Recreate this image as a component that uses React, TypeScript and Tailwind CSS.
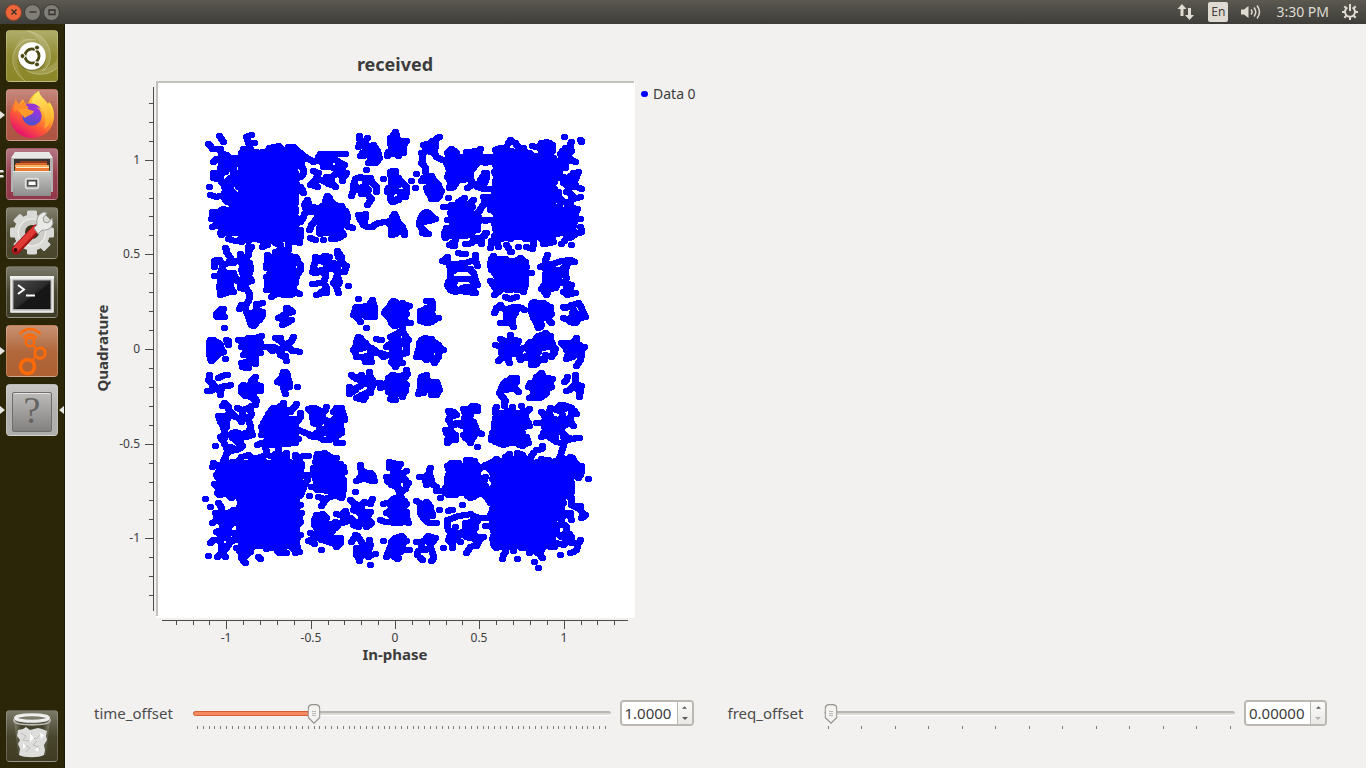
import { useId, useState } from "react";
import type { ReactNode } from "react";

/* ---------- constellation data ---------- */

type Quadrant = { x: number; y: number; points: string; dense: number[][] };

// Coordinates are in thirds of a pixel, relative to the quadrant origin.
const QUADRANTS: Quadrant[] = [
  {
    x: 180,
    y: 110,
    points: `118,78 130,96 86,102 98,116 120,118 100,155 108,148 125,128 138,134 198,82 214,75 224,99 204,98 190,118 210,118 220,125 240,128 262,124 280,112 296,108 325,110 340,112 352,122 368,134 385,146 400,155
    100,190 100,205 88,231 92,256 108,260 120,190 120,210 130,222 135,240 150,235 150,256 130,256 135,270 98,305 95,326 96,350 108,345 115,305 130,300 150,280 165,270 110,325 125,375 145,388 165,392 185,395 205,412 246,412 262,405 285,400 300,404 325,398 345,396 358,398 360,380 362,360 145,210 160,215 175,230 175,200 160,195 135,185 120,175 140,160 165,290 155,145 170,145 125,150 145,172 160,178 160,250 175,260 175,215
    365,150 362,165 370,180 368,195 352,205 362,232 370,250 382,270 372,285 390,290 395,305 378,305 370,320 362,335
    420,132 440,132 460,132 480,132 496,132 412,152 425,150 445,150 465,150 480,158 494,165 430,170 450,170 470,175 400,182 415,190 500,190 490,200 486,212 440,200 455,200 470,190 410,205 392,224 400,215 412,230 445,222 430,212 466,230 455,220 480,180
    442,258 435,272 452,272 412,294 400,305 465,285 483,288 490,300 500,308 502,325 498,345 516,354 505,350 490,375 475,385 455,388 430,390 405,390 390,385 388,360 395,345 405,330
    538,78 562,84 540,95 534,110 550,100 565,108 580,105 592,122 598,144 590,152 585,160 566,158 575,125 560,135 542,138 555,120 575,140
    646,66 632,84 650,85 630,102 645,105 624,125 640,125 622,138 655,138
    559,180 540,200 555,205 570,205 525,208 578,218 588,230 588,245 520,225 522,240 514,257 540,235 555,225 565,240 545,252 560,252 574,267 562,285 610,207 630,185 645,183 635,205 650,205 625,235 640,225 655,225 622,245 635,250 630,268 640,276 655,270
    555,312 535,316 542,330 555,325 550,345 562,352 578,350 588,342 600,338 642,312 635,330 622,335 650,330 630,345 645,350 635,372 638,376 655,365
    136,413 140,426 102,452 118,450 102,470 103,497 150,443 130,465 145,460 160,458 125,480 140,490 120,500 160,490 120,520 135,515 150,510 165,505 118,535 130,535 150,530 160,545 140,548 122,555 182,432 180,450 205,435 195,450 190,465 208,460 185,480 200,480 212,480 190,500 215,512 205,500 180,520 195,520 182,535 200,538 208,552 215,410 208,420 325,420 305,418 285,425
    262,435 262,455 258,475 260,500 262,520 260,540 275,560 290,550 310,556 330,556 345,545 358,552 345,520 350,500 360,480 360,465 352,450 345,440 320,435 290,440
    405,440 405,455 420,450 432,438 448,440 472,424 475,440 485,440 485,455 498,468 493,486 400,470 398,485 410,490 425,480 440,480 455,475 470,470 460,460 440,460 475,485 470,500 435,500 478,515 470,530 475,550 460,520 398,522 415,520 430,518 440,535 425,545 410,556 438,550 504,527
    120,600 130,596 108,612 122,615 132,622 112,622 133,654 206,574 195,588 184,585 178,598 230,582 246,580 200,605 215,610 230,600 248,606 205,620 215,630 235,620 245,622 210,640 220,648 230,636 318,594 325,596 338,605 318,612 305,620 296,624 315,630 335,630 306,645 318,640
    535,567 577,571 530,590 525,600 520,614 550,590 565,588 582,592 582,605 582,620 530,620 540,635 545,610 560,605 560,620 570,622 559,654 640,574 630,585 650,580 620,600 612,608 635,605 650,605 625,620 640,625 635,640 645,648 655,640
    92,690 108,695 145,692 175,690 244,677 205,684 225,684 286,685 300,685 340,680 335,692 262,711 280,712 325,700 310,705 88,712 105,712 120,705 145,705 190,698 215,700 235,695 190,712 215,715 240,712 535,680 545,690 530,695 555,700 590,687 605,690 630,680 645,675 540,708 565,712 625,705 645,695 640,712`,
    dense: [
      [185, 130, 345, 390],
      [120, 300, 190, 375],
      [125, 150, 175, 165],
      [270, 118, 345, 140],
      [415, 290, 485, 375],
      [270, 440, 345, 545],
    ],
  },
  {
    x: 390,
    y: 110,
    points: `16,66 20,82 30,95 50,93 35,110 20,105 5,110 10,130 25,130 40,130 40,115 5,90
    12,184 12,200 25,205 5,215 20,220 38,220 48,230 65,212 48,250 45,262 30,245 10,240 30,262 15,272 8,276
    13,312 18,325 25,338 5,335 38,352 20,350 5,355 5,375 42,365 44,376
    10,572 12,590 38,580 58,588 25,595 45,595 10,610 30,610 48,612 20,630 40,625 52,640 60,640 12,648 35,640
    110,572 125,572 127,588 110,595 90,604 125,605 105,610 92,615 130,622 144,624 115,620 90,632 108,640 125,635
    148,80 135,90 120,98 100,105 120,110 135,110 95,130 110,120 130,130 140,142 152,148 165,150 98,145 95,158 106,174
    78,191 76,234 108,196 125,198 95,214 115,212 132,212 145,225 108,234 125,230 140,238 154,242 115,250 130,255 148,258 125,266 140,266
    108,305 98,315 120,315 135,327 118,332 90,328 88,345 102,335 100,360 98,370 114,372
    184,118 172,128 200,128 228,125 245,125 262,122 272,116 265,135 180,145 172,165 268,155 255,165 245,180 180,185 172,200 180,225 190,230 200,215 232,235 250,222 178,235 240,205 262,230 258,140 282,190 272,210 290,188
    280,142 285,158 295,145 290,205 282,220 280,238 298,238 280,262 295,262 300,280 285,282
    175,264 160,290 175,290 223,264 205,275 250,270 240,282 272,296 262,310 285,332 270,330 172,330 168,355 162,370 165,385 178,405 194,408 195,390 225,402 245,400 260,385 275,402 275,385 285,370 262,360 250,390 262,340
    361,90 375,100 385,110 400,115 350,110 330,115 315,120 340,118 418,130 428,108 445,112 455,100 468,96 470,108 488,104 486,122 460,122 300,140 305,155 430,140 450,138 475,138
    523,80 572,90 575,95 545,96 540,110 525,115 545,122 510,132 530,135 545,150 555,155 525,155 525,175 566,186 550,190 560,200 520,200 535,205 550,215 520,220 540,230 560,232 575,237 530,245 545,255 555,265 570,262 545,270 505,245 503,258 515,270 528,280 505,290 540,290 562,296 555,310 572,326 555,330 572,350 575,367 560,370 545,380 530,385 515,402 545,405 490,395 470,400 460,402 430,395 428,416 410,410 385,410 365,425 350,405 325,410 302,413 305,393 290,370 300,330 300,300 320,395
    205,430 226,432 256,436 172,440 158,452 175,460 180,475 195,462 215,460 235,455 255,452 262,468 240,478 220,478 200,478 180,485 250,488 180,505 195,508 172,524 190,525 180,540 195,545 215,508 235,508 255,510 262,525 225,530 245,530 225,545 240,546 256,550 210,540
    310,438 360,425 300,458 305,480 300,513 312,530 313,554 325,545 345,562 362,568 380,560 400,545 405,525 405,510 405,490 425,490 410,470 405,455 390,445
    472,436 465,450 450,470 465,468 485,462 505,455 525,452 540,450 552,456 470,485 490,480 510,480 530,470 465,500 485,500 505,500 525,490 530,505 465,520 485,520 505,520 525,520 545,524 455,538 475,540 495,535 535,540 520,545 555,550 533,555 470,555 540,530
    332,585 318,595 312,608 350,600 370,590 385,590 402,600 335,595 360,610 375,610 350,620 368,625 332,640 350,638 365,640 370,652
    432,575 450,580 460,580 425,585 440,595 460,595 480,590 425,605 445,610 465,612 485,612 430,625 450,625 470,625 485,640 440,640 455,645 445,655
    566,578 545,585 525,595 520,590 550,600 575,595 580,610 585,620 560,615 545,620 520,625 535,630 560,635 550,640 565,625
    38,662 20,672 5,680 45,678 25,690 10,700 40,700 55,690 125,687 105,684 95,690 110,700 88,700 120,705 152,719 130,720 100,720 360,674 330,687 385,692 345,695 365,690 315,705 335,710 360,710 380,705 465,670 445,678 435,690 460,685 482,678 480,695 420,700 440,705 465,705 485,705 495,718 560,685 545,698 525,700 515,698 560,700 575,710 582,712 530,715 550,715`,
    dense: [
      [180, 140, 240, 215],
      [185, 285, 250, 375],
      [315, 125, 410, 390],
      [400, 145, 495, 385],
      [490, 150, 515, 200],
      [490, 300, 550, 370],
      [315, 450, 395, 540],
    ],
  },
  {
    x: 180,
    y: 340,
    points: `88,5 100,0 115,10 90,20 105,22 120,20 145,15 140,0 88,38 100,35 118,40 135,58 130,35 95,62 90,50 105,50
    190,0 210,5 230,0 185,22 200,25 220,22 240,10 240,40 190,45 210,45 230,40 185,68 225,60 225,72 188,80 205,85 205,65
    262,20 280,20 278,32 295,28 310,25 325,10 328,25 338,32 358,36 300,45 315,48 320,62 295,0
    530,10 550,5 520,30 540,28 560,20 575,25 590,35 530,50 550,50 555,65 575,65 570,45 600,40 620,20 640,20 655,20 620,45 640,45 655,50 610,50 645,70 645,82 655,65
    142,104 128,108 114,113 88,106 86,120 96,130 82,153 98,150 110,145 125,140 140,138 152,135 122,165 122,155
    225,110 215,122 222,130 190,135 205,140 220,145 240,138 184,142 185,155 200,155 215,160 242,153 230,150 210,170 225,178 195,168
    310,96 320,98 322,112 305,115 292,126 310,130 328,128 328,140 310,145 315,162 352,141
    514,104 568,96 570,110 545,106 550,120 528,118 582,128 565,130 545,135 535,140 575,145 508,141 525,150 508,161 528,174 545,165 560,160 550,180 570,160 600,130 600,145 640,105 625,115 645,120 620,135 640,140 655,140 625,155 640,160 630,178 645,180 655,110
    133,190 126,198 145,200 148,213 115,228 130,230 145,228 160,226 172,204 185,210 205,203 225,195 228,182 215,222 205,232 190,232 175,235 122,245 140,245 130,265 140,262 208,250 185,245 212,265 218,285 200,290 185,285 165,275 150,285 135,285 120,291 130,302 165,300 205,275 180,292 106,318 138,323 150,320 145,335 165,330 175,328 188,318 182,310
    310,188 350,192 280,205 295,205 310,205 340,205 330,215 360,220 360,232 270,215 262,230 255,240 350,245 245,260 250,275 245,285 355,270 370,275 355,298 335,310 315,312 295,314 275,315 255,315 232,316 245,308 335,290 295,220 310,222
    385,206 402,204 415,210 440,202 430,215 398,220 398,235 410,225 425,235 400,250 415,255 460,215 470,205 484,204 490,225 494,240 470,225 460,240 480,240 460,260 440,265 430,275 450,280 470,270 482,262 485,280 385,283 400,285 415,290 400,292 430,300 448,300 465,290 470,308 486,308 420,275 445,245
    258,334 295,334 262,345 240,350 320,338 345,345 370,348 386,348 350,355 135,350 130,362 185,352 205,345 218,355 150,370 170,365 280,350 300,352 320,355
    100,370 98,380 108,405 104,432 115,445 122,465 365,380 362,370 380,405 382,420 372,435 368,450 362,465 360,495 364,518 355,530 362,545 350,560 362,584 345,600 340,620 358,636 345,638 320,638 298,638 285,625 260,628 76,476 92,500 115,488 125,505 105,520 98,548 115,540 130,530 145,520 160,510 108,575 125,570 145,560 160,550 92,608 100,600 120,598 140,590 125,615 150,605 165,600 140,625 125,635 112,652 136,650 86,648 165,580 170,625 185,640 200,645 210,635 185,655 196,668 235,650 240,658 215,625 170,540 125,520 150,540 130,552 165,525 120,585 145,575
    412,342 432,340 450,350 470,355 408,360 400,385 400,405 395,440 408,440 415,470 435,480 452,470 470,465 485,475 488,460 490,440 490,420 492,395 490,380 455,370 430,360
    388,468 424,497 428,522 410,525 402,540 402,555 420,540 435,545 440,535 450,560 465,545 470,522 485,525 497,513 500,530 495,545 480,550 465,565 430,575 415,570 440,590 425,600 410,590 391,578 385,602 402,612 455,600 470,595 482,595 468,620 465,610 480,608 445,605 424,630 400,600 415,555 432,560 450,578
    540,376 545,390 530,422 545,415 545,405 560,400 572,398 580,412 582,424 565,420 526,455 511,480 577,476 552,486 525,492 540,500 570,492 520,510 535,515 550,515 570,515 512,535 525,545 520,555 545,530 560,535 575,550 560,560 545,545 534,560 525,586 532,588 514,606 568,600 545,605 550,620 570,615 530,625 565,630 586,642 565,650 545,640 530,645 538,662 540,652 571,675
    628,366 650,372 628,385 645,390 620,410 640,410 625,425 645,430 655,445 622,420 645,475 630,485 610,492 655,490 635,505 650,510 620,520 640,530 600,540 615,545 632,545 650,550 655,530 610,602 655,590 640,600 630,620 650,615 625,635 640,635 620,650 655,655`,
    dense: [
      [262, 235, 345, 305],
      [150, 370, 360, 470],
      [180, 460, 350, 625],
      [115, 375, 150, 465],
      [410, 370, 480, 455],
    ],
  },
  {
    x: 390,
    y: 340,
    points: `10,5 30,5 50,5 5,25 25,25 48,22 10,45 30,45 48,40 5,65 25,62 38,68 15,80
    80,50 85,30 90,12 110,10 130,5 120,25 145,15 160,30 145,35 100,35 120,45 145,52 110,60 133,68 130,55 95,50
    48,90 52,102 30,108 8,105 20,120 40,120 5,130 25,140 48,135 10,155 30,155 45,152 12,178 38,170 15,165
    108,105 95,112 90,128 110,120 120,128 138,125 145,140 148,150 110,140 125,145 95,145 84,162 100,158 125,165 138,165 140,155
    340,5 360,5 380,5 315,15 335,20 355,25 375,20 390,30 335,40 350,45 370,40 340,50 325,62 358,70 355,58 391,60 408,48 385,45
    420,5 440,5 460,5 485,5 410,20 430,25 450,25 470,20 488,20 492,38 420,40 440,45 465,45 485,50 425,60 445,60 462,60 425,75 440,72
    518,8 535,10 555,5 525,22 545,25 565,20 582,20 575,35 535,40 555,42 575,48 528,58 570,60 558,78 548,50
    365,115 378,115 350,122 340,132 355,135 372,130 335,145 350,150 328,158 370,145 386,156 340,175 345,183 378,125
    454,100 440,112 460,112 475,115 488,117 420,130 435,128 455,130 475,130 416,140 430,150 450,148 470,145 485,140 430,165 450,165 470,158 455,172 418,175 440,175
    556,104 532,112 524,126 555,115 555,132 575,138 560,145 545,145 530,152 570,155 568,170
    175,212 190,215 180,228 175,240 198,225 220,206 235,210 248,198 262,200 262,212 245,215 225,225 235,235 220,245 200,250 250,245 185,258 165,270 180,275 175,290 172,308 195,285 195,300 210,255 225,260 240,265 255,262 262,275 273,282 235,280 220,285 250,290 235,300 240,308 262,320 185,295
    318,200 342,198 368,200 395,198 418,206 315,215 405,220 312,250 410,240 418,258 312,270 305,300 305,290 325,310 340,315 360,308 380,310 398,318 415,308 410,290
    453,215 480,204 512,194 530,198 545,205 478,220 460,222 500,210 515,215 545,222 560,222 465,235 485,235 440,248 460,250 480,250 500,240 520,235 540,240 505,255 525,255 550,258 545,250 465,270 490,270 455,290 475,285 495,285 490,300 518,280 530,290 545,298 568,294 555,295 520,310 518,326 525,300 458,318 455,328 438,330 500,305 510,265
    345,350 358,343 382,340 398,345 425,348 320,358 305,368 295,372 455,358 475,360 512,348 542,350 550,360 575,378 575,395 565,415 596,416 545,430 545,445 530,460 545,473 360,356 380,356 400,358 420,360 505,362 525,362
    300,390 300,465 300,490 305,520 305,560 310,590 320,625 345,635 337,656 370,632 382,656 418,638 400,620 435,630 450,645 458,655 432,665 445,684 455,630 500,490 520,490 545,495 555,500 570,498 570,510 510,510 525,520 540,520 585,525 575,535 500,530 515,535 545,540 500,560 530,560 515,550 530,575 500,580 515,590 545,590 570,600 565,610 530,600 545,610 520,615 560,630 540,640 512,645 500,610 480,620
    230,360 252,362 205,368 185,370 172,378 275,380 290,380 180,395 172,415 172,435 160,452 175,465 195,465 152,474 225,460 240,475 260,465 275,460 290,470 280,430 265,415 285,410 262,395 290,445 268,445
    217,495 175,512 187,510 240,522 220,525 205,528 190,535 172,540 172,560 180,580 195,560 225,550 240,545 258,532 270,535 285,535 300,530 287,558 225,570 210,580 240,570 255,565 262,590 245,595 230,590 195,595 175,600 185,610 212,605 188,625 160,624 230,638 240,620 260,618 280,590 265,605 190,578 240,558 255,550 245,580
    120,384 118,395 88,411 105,412 120,410 125,420 110,434 125,432 138,440 138,453
    5,368 30,372 20,390 48,393 10,400 35,405 5,420 25,420 45,420 55,430 20,440 45,448 28,460 5,435 35,475 10,478 50,492 25,490 10,500 35,505 48,515 10,525 30,525 48,530 55,548 10,548 25,550 40,545
    80,482 108,486 95,495 90,510 105,505 120,500 125,515 148,510 95,525 110,525 128,528 105,540 118,550 140,548
    35,588 12,598 30,602 48,602 15,615 35,618 58,630 10,635 25,640 40,630 22,657 5,645 5,605
    115,588 105,600 136,594 80,605 95,608 125,610 95,625 82,645 85,632 105,630 120,622 128,640 130,655 98,660 124,664`,
    dense: [
      [320, 215, 405, 300],
      [310, 365, 560, 410],
      [310, 400, 540, 475],
      [310, 480, 490, 620],
      [185, 375, 255, 455],
    ],
  },
];

function dot(x: number, y: number) {
  return `M${x - 2} ${y - 3}h5v1h1v4h-1v1h-5v-1h-1v-4h1z`;
}

// Neighbours closer than this (in thirds of a pixel) belong to one cloud.
const LINK = 23;

function buildSamples() {
  const parts = new Set<string>();
  let seed = 11;
  const jitter = () => {
    seed = (seed * 1103515245 + 12345) % 2147483648;
    return Math.floor((seed / 2147483648) * 3) - 1;
  };
  for (const q of QUADRANTS) {
    const place = (px: number, py: number) =>
      parts.add(dot(q.x + Math.floor(px / 3), q.y + Math.round(py / 3)));
    const points = q.points
      .trim()
      .split(/\s+/)
      .map((pair) => pair.split(",").map(Number));
    points.forEach(([px, py], i) => {
      place(px, py);
      for (let j = i + 1; j < points.length; j++) {
        const [nx, ny] = points[j];
        if (Math.hypot(nx - px, ny - py) < LINK) place((nx + px) / 2, (ny + py) / 2);
      }
    });
    for (const [x0, y0, x1, y1] of q.dense) {
      for (let y = y0; y <= y1; y += 10) {
        for (let x = x0; x <= x1; x += 10) {
          place(x + jitter() * 3, y + jitter() * 3);
        }
      }
    }
  }
  return [...parts].join("");
}

const SAMPLES = buildSamples();
const TICKS = Array.from({ length: 27 }, (_, i) => i - 13);

function Constellation() {
  return (
    <svg
      viewBox="90 78 546 588"
      className="h-[588px] w-[546px] shrink-0"
      role="img"
      aria-label="received"
      fontFamily="'Noto Sans', sans-serif"
      fill="#3c3c3c"
    >
      <g shapeRendering="crispEdges">
        <rect x="156" y="81" width="479" height="537" fill="#ffffff" />
        <path d="M156 81h478v2h-476v533h-2z" fill="#c3c1be" />
        <path d={SAMPLES} fill="#0000ff" />
        <path d="M153 87h1v524h-1zM162 620h466v1h-466z" fill="#4c4c4c" />
        {TICKS.map((t) => {
          const len = t % 5 === 0 ? 8 : 4;
          return (
            <g key={t} fill="#4c4c4c">
              <rect x={Math.round(395 + t * 16.87)} y="621" width="1" height={len} />
              <rect x={153 - len} y={Math.round(349 - t * 18.93)} width={len} height="1" />
            </g>
          );
        })}
      </g>
      {[-1, -0.5, 0, 0.5, 1].map((v) => (
        <g key={v} fontSize="12">
          <text x={Math.round(395 + v * 168.7)} y="642" textAnchor="middle">
            {v}
          </text>
          <text x="140" y={Math.round(353 - v * 189.3)} textAnchor="end">
            {v}
          </text>
        </g>
      ))}
      <g fontSize="15" fontWeight="700" textAnchor="middle">
        <text x="395" y="660">
          In-phase
        </text>
        <text transform="translate(108 348) rotate(-90)">Quadrature</text>
      </g>
    </svg>
  );
}

/* ---------- controls ---------- */

type OffsetProps = {
  label: string;
  labelClass: string;
  spinClass: string;
  digits: number;
  initial: number;
  max: number;
  min: number;
  step: number;
  ticks: number;
};

function OffsetControl({ label, labelClass, spinClass, digits, initial, min, max, step, ticks }: OffsetProps) {
  const id = useId();
  const [value, setValue] = useState(initial);
  const ratio = (value - min) / (max - min);
  const set = (v: number) => setValue(Math.min(max, Math.max(min, v)));
  return (
    <div className="flex items-start">
      <label htmlFor={id} className={`${labelClass} shrink-0 leading-[26px]`}>
        {label}
      </label>
      <div className="min-w-0 flex-1">
        <div className="relative flex h-[26px] items-center">
          <div className="h-[5px] w-full overflow-hidden rounded-full border-t-2 border-b border-t-[#b9b6b1] border-b-white bg-[#dcdad7]" />
          {ratio > 0 && (
            <div
              className="absolute left-0 h-[5px] rounded-l-full border border-[#d65e33] bg-[#f58a62]"
              style={{ width: `${ratio * 100}%` }}
            />
          )}
          <div className="pointer-events-none absolute inset-x-[7px] inset-y-0">
            <svg
              viewBox="0 0 13 20"
              className="absolute top-1 h-5 w-[13px] -translate-x-1/2"
              style={{ left: `${ratio * 100}%` }}
            >
              <path
                d="M.7 5Q.7.7 5 .7h3q4.300 0 4.300 4.300v8.500L6.500 19.200.7 13.500z"
                fill="#f4f3f2"
                stroke="#95928c"
                strokeWidth="1.200"
              />
              <path d="M4.500 7.500h4M4.500 9.500h4M4.500 11.500h4" stroke="#aaa7a2" strokeWidth=".8" />
            </svg>
          </div>
          <input
            type="range"
            aria-label={`${label} slider`}
            min={min}
            max={max}
            step={step}
            value={value}
            onChange={(e) => set(Number(e.target.value))}
            className="absolute inset-0 m-0 h-full w-full cursor-pointer opacity-0"
          />
        </div>
        <div className="mx-[4px] flex h-[3px] justify-between" aria-hidden="true">
          {Array.from({ length: ticks }, (_, i) => (
            <span key={i} className="w-px bg-[#7f7d79]" />
          ))}
        </div>
      </div>
      <div
        className={`${spinClass} ml-[9px] flex h-[26px] shrink-0 overflow-hidden rounded-[4px] border-2 border-[#bbb8b2] bg-white`}
      >
        <input
          id={id}
          type="text"
          value={value.toFixed(digits)}
          onChange={(e) => set(Number(e.target.value) || min)}
          className="min-w-0 flex-1 bg-white pl-[3px] text-[15px] text-[#3c3c3c] outline-none"
        />
        <div className="flex w-[15px] flex-col border-l border-[#bbb8b2] bg-gradient-to-b from-[#fbfbfa] to-[#e9e8e6]">
          <button
            type="button"
            aria-label={`Increase ${label}`}
            onClick={() => set(value + step)}
            className="flex flex-1 items-center justify-center"
          >
            <svg viewBox="0 0 6 3" className="h-[3px] w-[5px]">
              <path d="M0 3L3 0l3 3z" fill="#5c5a56" />
            </svg>
          </button>
          <button
            type="button"
            aria-label={`Decrease ${label}`}
            onClick={() => set(value - step)}
            className="flex flex-1 items-center justify-center"
          >
            <svg viewBox="0 0 6 3" className="h-[3px] w-[6px]">
              <path d="M0 0h6L3 3z" fill={value <= min ? "#b3b0ab" : "#5c5a56"} />
            </svg>
          </button>
        </div>
      </div>
    </div>
  );
}

/* ---------- launcher ---------- */

function Tile({
  label,
  tone,
  pips = 0,
  focused = false,
  children,
}: {
  label: string;
  tone: string;
  pips?: number;
  focused?: boolean;
  children: ReactNode;
}) {
  return (
    <button
      type="button"
      aria-label={label}
      className={`${tone} relative h-[52px] w-[52px] shrink-0 rounded-[4px] border border-white/20 bg-gradient-to-b from-white/35 via-white/10 to-white/5`}
    >
      <svg viewBox="0 0 52 52" className="absolute -top-px -left-px h-[52px] w-[52px]">
        {children}
      </svg>
      {pips > 0 && (
        <svg viewBox="0 0 5 10" className="absolute top-[20px] -left-[7px] h-[10px] w-[5px]" fill="#e6e5e2">
          {pips === 1 ? <path d="M0 1l5 4-5 4z" /> : <path d="M0 1h3l1 1.500-1 1H0zM0 6h3l1 1.500-1 1H0z" />}
        </svg>
      )}
      {focused && (
        <svg viewBox="0 0 5 10" className="absolute top-[20px] -right-[7px] h-[10px] w-[5px]" fill="#e6e5e2">
          <path d="M5 1L0 5l5 4z" />
        </svg>
      )}
    </button>
  );
}

function Launcher() {
  return (
    <nav
      aria-label="Launcher"
      className="flex w-[65px] shrink-0 flex-col gap-[7px] border-r border-[#1c1a08] bg-[#2b2607] px-[6px] py-[6px]"
    >
      <Tile label="Search your computer" tone="bg-[#85801c]">
        <path d="M1 11C9 7 20 6 30 12c-9-1-17 4-18 13-3 7 0 16 7 26C9 42 5 30 9 19 10 13 14 9 20 7 13 7 7 8 1 11z" fill="#fff" fillOpacity=".12" />
        <path d="M21 1c15 2 25 14 23 29-1 5-4 9-8 11 5-8 5-17 0-24C33 10 28 4 21 1z" fill="#fff" fillOpacity=".15" />
        <path d="M51 38c-9 8-22 8-31 2-4-3-7-7-7-12 5 9 14 13 23 11 6-1 11-4 15-9z" fill="#fff" fillOpacity=".17" />
        <g fill="none" stroke="#dcdba8" strokeOpacity=".5">
          <path d="M19 51C7 42 3 27 11 17c5-7 12-9 19-7" />
          <path d="M21 1c15 2 25 14 23 29-1 5-4 9-8 11" />
          <path d="M51 38c-9 8-22 8-31 2" />
        </g>
        <circle cx="26" cy="27" r="14" fill="#514d10" opacity=".5" />
        <circle cx="26" cy="26" r="13.800" fill="#fff" />
        <circle cx="26" cy="26" r="7" fill="none" stroke="#4d4914" strokeWidth="3" />
        <path d="M26 26H12M26 26l7-12M26 26l7 12" stroke="#fff" strokeWidth="1.200" />
        <circle cx="26" cy="26" r="5.500" fill="#fff" />
        <g fill="#4d4914" stroke="#fff" strokeWidth="1">
          <circle cx="16.500" cy="26" r="2.500" />
          <circle cx="31" cy="17.600" r="2.500" />
          <circle cx="31" cy="34.400" r="2.500" />
        </g>
      </Tile>

      <Tile label="Firefox" tone="bg-[#a94b38]" pips={1}>
        <defs>
          <linearGradient id="fx-body" x1=".85" y1=".1" x2=".3" y2="1">
            <stop offset="0" stopColor="#fff44f" />
            <stop offset=".35" stopColor="#ffb02e" />
            <stop offset=".65" stopColor="#ff5a36" />
            <stop offset="1" stopColor="#e30d72" />
          </linearGradient>
          <linearGradient id="fx-globe" x1=".7" y1="0" x2=".3" y2="1">
            <stop offset="0" stopColor="#a82ee0" />
            <stop offset="1" stopColor="#4655c9" />
          </linearGradient>
          <linearGradient id="fx-flame" x1="0" y1="0" x2=".3" y2="1">
            <stop offset="0" stopColor="#fff36a" />
            <stop offset="1" stopColor="#ffac2e" />
          </linearGradient>
        </defs>
        <path
          d="M10 9c0 3 1 5 3 6l4-5c1 3 2 5 5 6 1-6 5-11 11-14 0 5 6 8 9 13l1-2c4 4 5 9 5 14 0 13-10 22-22 22S4 40 4 27c0-6 2-10 5-14z"
          fill="url(#fx-body)"
        />
        <path d="M33 2c0 6 8 9 11 17 3 9 0 17-6 21 4-9 1-20-8-23-4-2-5-2-5-2 1-5 4-10 8-13z" fill="url(#fx-flame)" />
        <circle cx="26" cy="27" r="9.700" fill="url(#fx-globe)" />
        <path d="M11 20c5-3 9-2 13 1l4 1c-1 4-6 4-9 7-3-3-6-6-8-9z" fill="#ff9a2b" />
        <path d="M19 16c6-3 13-1 16 4-4-2-8-2-11 1-1-3-3-4-5-5z" fill="#9536d4" />
        <path d="M10 11c0 3 2 5 4 6l4-5c0 3 2 5 5 7-6 0-11 1-15 4 0-4 0-8 2-12z" fill="#ff8a2c" />
      </Tile>

      <Tile label="Files" tone="bg-[#8b2d3f]" pips={2}>
        <defs>
          <linearGradient id="files-front" x1="0" y1="0" x2="0" y2="1">
            <stop offset="0" stopColor="#c9c9c7" />
            <stop offset="1" stopColor="#8d8d8b" />
          </linearGradient>
        </defs>
        <path d="M9 4h34l4 7v33H5V11z" fill="#b5b4b2" />
        <path d="M9 4h34l4 6H5z" fill="#e8e8e6" />
        <path d="M8 11h36v12H8z" fill="#383431" />
        <path d="M14 13h27v2H14z" fill="#8f3a1d" />
        <path d="M10 15h31v8H9v-6z" fill="#d9662a" />
        <path d="M9 17h34v2H9z" fill="#f7b25e" />
        <path d="M10 19h33v1H10z" fill="#fbe8cb" />
        <path d="M9 20h34v3H9z" fill="#ee7a31" />
        <rect x="7" y="23" width="38" height="25" rx="1" fill="url(#files-front)" />
        <path d="M7 23.500h38" stroke="#efefed" />
        <rect x="19.500" y="30.500" width="13" height="10" rx="2" fill="#b2b1af" stroke="#dededc" strokeWidth="1.500" />
        <rect x="21.800" y="32.800" width="8.500" height="5" fill="#fff" stroke="#444340" strokeWidth="1.400" />
      </Tile>

      <Tile label="System Settings" tone="bg-[#3e3b20]">
        <g fill="#d9d9d6">
          {[0, 45, 90, 135].map((a) => (
            <rect key={a} x="21" y="3.500" width="10" height="44" rx="1.500" transform={`rotate(${a} 26 25.500)`} />
          ))}
          <circle cx="26" cy="25.500" r="18" />
        </g>
        <circle cx="26" cy="25.500" r="13.500" fill="#cecdca" stroke="#efefec" strokeWidth="1.200" />
        <circle cx="26" cy="25" r="7" fill="#38351a" />
        <path d="M10 43L30 22" stroke="#a51414" strokeWidth="9" strokeLinecap="round" />
        <path d="M10 42L29 22" stroke="#e03a35" strokeWidth="6" strokeLinecap="round" />
        <circle cx="9.500" cy="43" r="2" fill="#3a0909" />
        <path
          d="M28 21l3-3c-1-6 1-11 7-13l3 1-4 5 1 4 4 1 4-5 1 5c-1 5-6 8-11 7l-4 4z"
          fill="#e9e9e7"
          stroke="#999996"
          strokeWidth="1"
        />
      </Tile>

      <Tile label="Terminal" tone="bg-[#35321a]">
        <defs>
          <linearGradient id="term-glass" x1="0" y1="0" x2="1" y2="1">
            <stop offset="0" stopColor="#4c4c4c" />
            <stop offset=".5" stopColor="#2b2b2b" />
            <stop offset=".55" stopColor="#161616" />
          </linearGradient>
        </defs>
        <rect x="4" y="10" width="44" height="37" rx="1" fill="#a9aaa9" />
        <path d="M4 10h44v3H4z" fill="#f3f3f1" />
        <rect x="5.500" y="12.500" width="41" height="33" fill="none" stroke="#e8e8e6" strokeWidth="2" />
        <rect x="7.500" y="14.500" width="37" height="28.500" fill="url(#term-glass)" />
        <path d="M12 19l6 4.500-6 4.500M20 29.500h9" fill="none" stroke="#fff" strokeWidth="2" />
      </Tile>

      <Tile label="GNU Radio Companion" tone="bg-[#a95827]" pips={1}>
        <g fill="none" stroke="#ff6a08">
          <path d="M13.500 9q10.500-10 21 0" strokeWidth="2.600" />
          <path d="M17.500 13q6.500-7 13 0" strokeWidth="2.600" />
          <circle cx="24" cy="17" r="4.200" strokeWidth="2.500" />
          <circle cx="34" cy="28" r="5.200" strokeWidth="2.800" />
          <circle cx="21.500" cy="41.500" r="7" strokeWidth="3.600" />
          <path d="M27 20.500l3 3M29 32l-3 4" strokeWidth="2" />
        </g>
      </Tile>

      <Tile label="Unknown application" tone="bg-[#aaa9a6]" pips={1} focused>
        <defs>
          <linearGradient id="unknown-face" x1="0" y1="0" x2="0" y2="1">
            <stop offset="0" stopColor="#bdbcba" />
            <stop offset="1" stopColor="#81807e" />
          </linearGradient>
        </defs>
        <rect x="6.500" y="8.500" width="39" height="39" rx="1.500" fill="url(#unknown-face)" stroke="#6f6e6c" />
        <path d="M8 9.500h36" stroke="#e5e4e2" />
        <text x="26" y="39" textAnchor="middle" fontSize="38" fontFamily="'Liberation Serif', serif" fill="#656462">
          ?
        </text>
      </Tile>

      <div className="mt-auto flex">
        <Tile label="Trash" tone="bg-[#353217]">
          <defs>
            <linearGradient id="bin-glass" x1="0" y1="0" x2="1" y2="0">
              <stop offset="0" stopColor="#8c8b7c" />
              <stop offset=".2" stopColor="#3d3b26" />
              <stop offset=".8" stopColor="#3d3b26" />
              <stop offset="1" stopColor="#8c8b7c" />
            </linearGradient>
          </defs>
          <path d="M8 9l4 35c1 4 27 4 28 0l4-35z" fill="url(#bin-glass)" opacity=".75" />
          <path
            d="M12 20l5-1 3-2 4 3 4-1 4-1 4 1 5 2-1 5 1 4-3 5 1 5-1 5c-5 3-20 3-25 0l1-6-2-5 2-4-3-4z"
            fill="#dddddb"
          />
          <path
            d="M15 23l5 3-3 4 6 1M26 23l-2 4 6 2 4-4M31 31l-4 4 6 2M19 35l5 3-4 4M34 38l-3 4"
            fill="none"
            stroke="#bcbcb9"
            strokeWidth="1"
          />
          <path d="M24 23l4 5-4 4zM34 23l4 2-3 4zM17 33l3 3-3 3zM29 39l4-1-1 4z" fill="#fff" />
          <ellipse cx="26" cy="8" rx="16.500" ry="3.200" fill="#7c7b6c" stroke="#ededeb" strokeWidth="3" />
          <path d="M8 9v2c2 5 34 5 36 0V9" fill="none" stroke="#b9b9b5" strokeWidth="1.800" />
        </Tile>
      </div>
    </nav>
  );
}

/* ---------- top panel ---------- */

function WindowButton({ label, tone, d }: { label: string; tone: string; d: string }) {
  return (
    <button type="button" aria-label={label} className={`${tone} flex h-[17px] w-[17px] items-center justify-center rounded-full border`}>
      <svg viewBox="0 0 14 14" className="h-[14px] w-[14px]" fill="none" stroke="#33312d" strokeWidth="1.300">
        <path d={d} />
      </svg>
    </button>
  );
}

function TopPanel() {
  return (
    <header className="flex h-6 items-center justify-between bg-gradient-to-b from-[#5b5950] to-[#3e3d39] pr-[7px] pl-[5px]">
      <div className="flex gap-[2px]">
        <WindowButton label="Close" tone="border-[#84402a] bg-[#ee6539]" d="M4.500 4.500l5 5M9.500 4.500l-5 5" />
        <WindowButton label="Minimize" tone="border-[#3a3935] bg-[#807e76]" d="M3.500 7h7" />
        <WindowButton label="Restore" tone="border-[#3a3935] bg-[#807e76]" d="M4 5h6v4.500H4z" />
      </div>
      <div className="flex items-center text-[#dfdbd2]">
        <button type="button" aria-label="Network" className="mr-[13px]">
          <svg viewBox="0 0 18 18" className="h-[18px] w-[18px]" fill="currentColor">
            <path d="M5 1l4.500 5H6.500v7h-3V6H.5zM12.500 17L8 12h3V5h3v7h3z" />
          </svg>
        </button>
        <button
          type="button"
          aria-label="Keyboard layout"
          className="mr-[12px] flex h-5 w-5 items-center justify-center rounded-[2px] bg-[#dfdbd2] text-[12px] text-[#44423d]"
        >
          En
        </button>
        <button type="button" aria-label="Sound" className="mr-[15px]">
          <svg viewBox="0 0 21 16" className="h-4 w-[21px]">
            <path d="M1 5.500h3L8.500 2v12L4 10.500H1z" fill="currentColor" />
            <path
              d="M11 5.500q2 2.500 0 5M14 3.500q3.500 4.500 0 9M17 1.500q5 6.500 0 13"
              fill="none"
              stroke="currentColor"
              strokeWidth="1.500"
            />
          </svg>
        </button>
        <time className="mr-[12px] text-[14px] leading-6">3:30 PM</time>
        <button type="button" aria-label="System">
          <svg viewBox="0 0 18 18" className="h-[18px] w-[18px]" fill="none" stroke="currentColor">
            <path d="M6.500 4.500a5 5 0 1 0 5 0" strokeWidth="2" />
            <path d="M9 1v7" strokeWidth="2" />
            <path
              d="M1 9h3M14 9h3M3.300 3.300l2 2M14.700 3.300l-2 2M3.300 14.700l2-2M14.700 14.700l-2-2M9 14v3"
              strokeWidth="2"
            />
          </svg>
        </button>
      </div>
    </header>
  );
}

export default function App() {
  return (
    <div className="flex min-h-screen flex-col bg-[#f2f1f0] font-['Noto_Sans',sans-serif] text-[15px] text-[#4c4c4c]">
      <TopPanel />
      <div className="flex flex-1">
        <Launcher />
        <main className="flex min-w-0 flex-1 flex-col pb-[39px]">
          <section className="flex items-start pt-[26px] pl-[25px]">
            <div className="flex flex-col">
              <h1 className="pl-16 text-center text-[18px] leading-[28px] font-bold text-[#3c3c3c]">received</h1>
              <Constellation />
            </div>
            <div className="flex items-center gap-[5px] pt-[33px] pl-[5px] text-[14px] leading-[22px] text-[#3c3c3c]">
              <span className="h-[6px] w-[7px] rounded-full bg-[#0000ff]" />
              Data 0
            </div>
          </section>
          <section className="mt-auto grid grid-cols-2 gap-[34px] pr-[39px] pl-[29px]">
            <OffsetControl
              label="time_offset"
              labelClass="w-[99px]"
              spinClass="w-[74px]"
              digits={4}
              initial={1}
              min={0.9983}
              max={1.0043}
              step={0.0001}
              ticks={71}
            />
            <OffsetControl
              label="freq_offset"
              labelClass="w-[96px]"
              spinClass="w-[83px]"
              digits={5}
              initial={0}
              min={0}
              max={1}
              step={0.00001}
              ticks={13}
            />
          </section>
        </main>
      </div>
    </div>
  );
}
